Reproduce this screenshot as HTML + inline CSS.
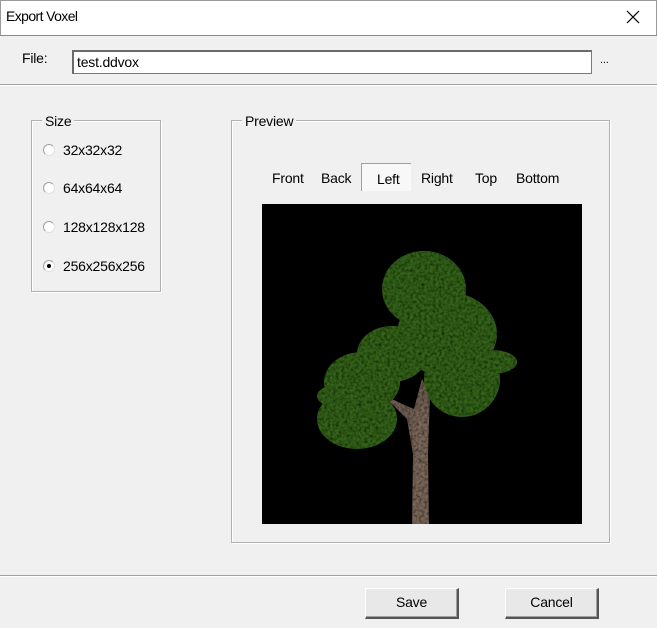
<!DOCTYPE html>
<html><head><style>
*{margin:0;padding:0;box-sizing:border-box}
body{width:657px;height:628px;background:#f0f0f0;font-family:"Liberation Sans",sans-serif;font-size:14px;color:#000;position:relative;overflow:hidden;letter-spacing:-0.2px}
.abs{position:absolute}
.title{left:0;top:0;width:657px;height:35px;background:#fff;border:1px solid #9a9a9a;border-bottom:none}
.grp{border:1px solid #b0b0b0;box-shadow:1px 1px 0 #fff inset,1px 1px 0 #fff}
.lbl{background:#f0f0f0;padding:0 3px}
.radio{width:12px;height:12px;border-radius:50%;background:#fff;border:1px solid #a0a0a0;border-right-color:#e0e0e0;border-bottom-color:#e0e0e0}
.btn{background:#e8e8e8;border:1px solid #fff;border-right:2px solid #555;border-bottom:2px solid #555;text-align:center;line-height:27px;box-shadow:inset -1px -1px 0 #a0a0a0}
</style></head><body>
<div class="abs title"></div>
<div class="abs" style="left:6px;top:8px;font-size:14px;letter-spacing:-0.6px">Export Voxel</div>
<svg class="abs" style="left:626px;top:10px" width="14" height="14"><path d="M1 1L13 13M13 1L1 13" stroke="#000" stroke-width="1.2"/></svg>
<div class="abs" style="left:0;top:35px;width:657px;height:1px;background:#888"></div>
<div class="abs" style="left:0;top:84px;width:657px;height:2px;border-top:1px solid #a0a0a0;border-bottom:1px solid #fff"></div>
<div class="abs" style="left:22px;top:50px">File:</div>
<div class="abs" style="left:72px;top:50px;width:520px;height:24px;background:#fff;border:1px solid #7a7a7a;border-top:2px solid #6a6a6a;border-left:2px solid #6a6a6a;padding:2px 3px;font-size:14px">test.ddvox</div>
<div class="abs" style="left:600px;top:54px;font-size:11px">...</div>

<div class="abs grp" style="left:31px;top:120px;width:130px;height:172px"></div>
<div class="abs lbl" style="left:42px;top:113px">Size</div>
<div class="abs radio" style="left:43px;top:144px"></div><div class="abs" style="left:63px;top:142px">32x32x32</div>
<div class="abs radio" style="left:43px;top:182px"></div><div class="abs" style="left:63px;top:180px">64x64x64</div>
<div class="abs radio" style="left:43px;top:221px"></div><div class="abs" style="left:63px;top:219px">128x128x128</div>
<div class="abs radio" style="left:43px;top:260px"></div><div class="abs" style="left:47px;top:264px;width:4px;height:4px;border-radius:50%;background:#000"></div><div class="abs" style="left:63px;top:258px">256x256x256</div>

<div class="abs grp" style="left:231px;top:120px;width:379px;height:423px"></div>
<div class="abs lbl" style="left:242px;top:113px">Preview</div>
<div class="abs" style="left:361px;top:163px;width:50px;height:28px;background:#f8f8f8;border-top:1px solid #a0a0a0;border-left:1px solid #a0a0a0"></div>
<div class="abs" style="left:272px;top:170px">Front</div>
<div class="abs" style="left:321px;top:170px">Back</div>
<div class="abs" style="left:377px;top:171px">Left</div>
<div class="abs" style="left:421px;top:170px">Right</div>
<div class="abs" style="left:475px;top:170px">Top</div>
<div class="abs" style="left:516px;top:170px">Bottom</div>

<svg class="abs" style="left:262px;top:204px;background:#000" width="320" height="320">
<defs><filter id="n" x="0" y="0" width="100%" height="100%"><feTurbulence type="fractalNoise" baseFrequency="0.35" numOctaves="2" result="t"/><feColorMatrix in="t" type="matrix" values="0 0 0 0 0  0 0 0 0 0  0 0 0 0 0  0 0 0 1.6 -0.55" result="m"/><feComposite in="m" in2="SourceGraphic" operator="in" result="d"/><feMerge><feMergeNode in="SourceGraphic"/><feMergeNode in="d"/></feMerge></filter></defs>
<path d="M150 320L151 250L145 215L120 190L140 200L152 205L160 175L168 190L166 250L167 320Z" fill="#6f5e52" filter="url(#n)"/>
<g fill="#36621e" filter="url(#n)">
<ellipse cx="162" cy="85" rx="42" ry="38"/>
<ellipse cx="185" cy="130" rx="50" ry="42"/>
<ellipse cx="200" cy="175" rx="38" ry="38"/>
<ellipse cx="230" cy="158" rx="25" ry="12"/>
<ellipse cx="130" cy="150" rx="35" ry="28"/>
<ellipse cx="100" cy="178" rx="38" ry="30"/>
<ellipse cx="95" cy="215" rx="40" ry="30"/>
<ellipse cx="80" cy="192" rx="25" ry="12"/>
</g>
<path d="M151 320L152 255L150 225L158 200L166 205L166 320Z" fill="#7a685a" filter="url(#n)"/>
</svg>

<div class="abs" style="left:0;top:575px;width:657px;height:2px;border-top:1px solid #a0a0a0;border-bottom:1px solid #fff"></div>
<div class="abs btn" style="left:365px;top:588px;width:94px;height:31px">Save</div>
<div class="abs btn" style="left:505px;top:588px;width:94px;height:31px">Cancel</div>
</body></html>
